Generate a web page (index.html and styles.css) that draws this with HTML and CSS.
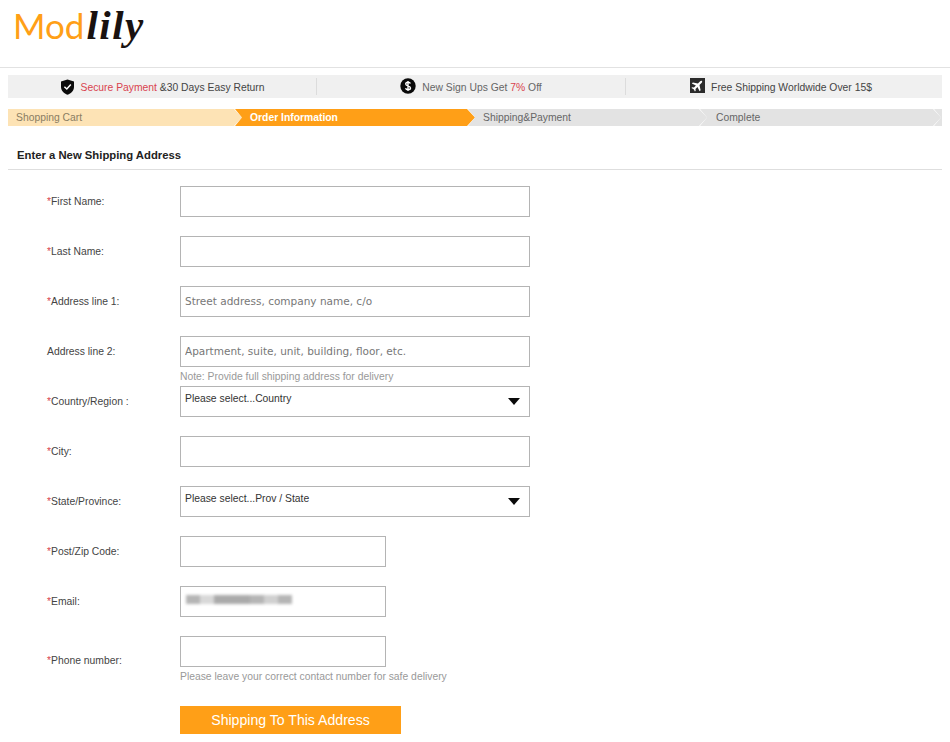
FILE: index.html
```html
<!DOCTYPE html>
<html lang="en">

<head>
    <meta charset="UTF-8">
    <meta name="viewport" content="width=device-width, initial-scale=1.0">
    <title>Enter a New Shipping Address</title>
    <link rel="stylesheet" href="styles.css">
</head>

<body>

    <header class="site-header">
        <a class="logo" href="#"><span class="logo-mod">Mod</span><span class="logo-lily">lily</span></a>
    </header>

    <div class="page">
        <div class="promo-bar">
            <div class="promo-item">
                <svg class="promo-icon" width="15" height="16" viewBox="0 0 15 16">
                    <path d="M7.5 0.5 L14 2.6 V8 C14 11.8 11 14.3 7.5 15.8 C4 14.3 1 11.8 1 8 V2.6 Z" fill="#0a0a0a"/>
                    <path d="M4.4 7.8 L6.8 10 L10.8 5.6" fill="none" stroke="#fff" stroke-width="1.5"/>
                </svg>
                <span><span class="red">Secure Payment</span> &amp;30 Days Easy Return</span>
            </div>
            <div class="promo-item">
                <svg class="promo-icon icon-up" width="16" height="16" viewBox="0 0 16 16">
                    <circle cx="8" cy="8" r="7.7" fill="#0a0a0a"/>
                    <path d="M10.4 5.6 C10 4.6 9 4.2 8 4.2 C6.7 4.2 5.7 4.9 5.7 6 C5.7 8.5 10.5 7.3 10.5 10 C10.5 11.1 9.4 11.8 8 11.8 C6.9 11.8 5.9 11.3 5.5 10.3 M8 3 V13" fill="none" stroke="#fff" stroke-width="1.4"/>
                </svg>
                <span class="muted">New Sign Ups Get <span class="red">7%</span> Off</span>
            </div>
            <div class="promo-item">
                <svg class="promo-icon icon-up" width="15" height="15" viewBox="0 0 15 15">
                    <rect width="15" height="15" fill="#2b2b2b"/>
                    <path transform="rotate(45 7.5 7.5)" d="M7.5 1.2 C8.2 1.2 8.6 2 8.6 3 V5.8 L13 8.6 V10 L8.6 8.6 V11.4 L10 12.6 V13.6 L7.5 12.9 L5 13.6 V12.6 L6.4 11.4 V8.6 L2 10 V8.6 L6.4 5.8 V3 C6.4 2 6.8 1.2 7.5 1.2 Z" fill="#fff"/>
                </svg>
                <span>Free Shipping Worldwide Over 15$</span>
            </div>
        </div>

        <ol class="steps">
            <li class="step step-done">Shopping Cart</li>
            <li class="step step-active">Order Information</li>
            <li class="step">Shipping&amp;Payment</li>
            <li class="step">Complete</li>
            <li class="step"></li>
        </ol>

        <h2 class="form-title">Enter a New Shipping Address</h2>

        <form class="address-form" action="">
            <div class="form-row">
                <label for="first"><span class="red">*</span>First Name:</label>
                <div class="field"><input type="text" id="first"></div>
            </div>
            <div class="form-row">
                <label for="last"><span class="red">*</span>Last Name:</label>
                <div class="field"><input type="text" id="last"></div>
            </div>
            <div class="form-row">
                <label for="addr1"><span class="red">*</span>Address line 1:</label>
                <div class="field"><input type="text" id="addr1" placeholder="Street address, company name, c/o"></div>
            </div>
            <div class="form-row">
                <label for="addr2">Address line 2:</label>
                <div class="field">
                    <input type="text" id="addr2" placeholder="Apartment, suite, unit, building, floor, etc.">
                    <p class="note">Note: Provide full shipping address for delivery</p>
                </div>
            </div>
            <div class="form-row">
                <label for="country"><span class="red">*</span>Country/Region :</label>
                <div class="field select-wrap">
                    <select id="country"><option>Please select...Country</option></select>
                </div>
            </div>
            <div class="form-row">
                <label for="city"><span class="red">*</span>City:</label>
                <div class="field"><input type="text" id="city"></div>
            </div>
            <div class="form-row">
                <label for="state"><span class="red">*</span>State/Province:</label>
                <div class="field select-wrap">
                    <select id="state"><option>Please select...Prov / State</option></select>
                </div>
            </div>
            <div class="form-row">
                <label for="zip"><span class="red">*</span>Post/Zip Code:</label>
                <div class="field field-short"><input type="text" id="zip"></div>
            </div>
            <div class="form-row">
                <label for="email"><span class="red">*</span>Email:</label>
                <div class="field field-short email-wrap">
                    <input type="text" id="email">
                    <div class="blurred"><i></i><i></i><i></i><i></i><i></i><i></i><i></i></div>
                </div>
            </div>
            <div class="form-row form-row-center">
                <label for="phone"><span class="red">*</span>Phone number:</label>
                <div class="field field-short">
                    <input type="text" id="phone">
                    <p class="note">Please leave your correct contact number for safe delivery</p>
                </div>
            </div>
            <button type="button" class="submit-btn">Shipping To This Address</button>
        </form>
    </div>

</body>

</html>
```

FILE: styles.css
```css
body {
    margin: 0;
    background: #fff;
    color: #444;
    font-family: "Liberation Sans", Arial, sans-serif;
    font-size: 10.35px;
}

.red {
    color: #d9434e;
}

.muted {
    color: #666;
}

.site-header {
    height: 67px;
    border-bottom: 1px solid #e2e2e2;
    overflow: hidden;
}

.logo {
    display: flex;
    align-items: baseline;
    height: 48px;
    padding-top: 1px;
    padding-left: 13px;
    line-height: 48px;
    text-decoration: none;
}

.logo-mod {
    font-family: Lato, sans-serif;
    font-weight: 400;
    font-size: 35px;
    color: #ff9f17;
}

.logo-lily {
    margin-left: 2px;
    font-family: "Liberation Serif", serif;
    font-style: italic;
    font-weight: 700;
    font-size: 41px;
    letter-spacing: 1.5px;
    color: #1a1210;
}

.page {
    padding: 7px 8px 0;
}

.promo-bar {
    display: grid;
    grid-template-columns: 309px 309px 316px;
    height: 23px;
    background: #f0f0f0;
}

.promo-item {
    display: flex;
    align-items: center;
    justify-content: center;
    gap: 6px;
    margin: 3px 0;
    padding-top: 1px;
    border-right: 1px solid #dcdcdc;
}

.promo-item:last-child {
    padding-right: 6px;
    border-right: none;
}

.promo-icon {
    flex: none;
}

.icon-up {
    margin-top: -3px;
}

.steps {
    display: grid;
    grid-template-columns: 227px 233px 232px 234px 8px;
    height: 17px;
    margin: 11px 0 0;
    padding: 0;
    list-style: none;
}

.step {
    margin-right: -7px;
    padding-left: 15px;
    line-height: 17px;
    color: #666;
    background: #e3e3e3;
    clip-path: polygon(0 0, calc(100% - 8px) 0, 100% 50%, calc(100% - 8px) 100%, 0 100%, 7px 50%);
}

.step:first-child {
    padding-left: 8px;
    clip-path: polygon(0 0, calc(100% - 8px) 0, 100% 50%, calc(100% - 8px) 100%, 0 100%);
}

.step:nth-child(4) {
    padding-left: 16px;
}

.step:last-child {
    margin-right: 0;
    padding-left: 0;
    clip-path: polygon(0 0, 100% 0, 100% 100%, 0 100%, 7px 50%);
}

.step-done {
    color: #8a7d63;
    background: #fde3b5;
}

.step-active {
    color: #fff;
    font-weight: 700;
    background: #ff9f17;
}

.form-title {
    margin: 0;
    padding: 22px 0 7px 9px;
    border-bottom: 1px solid #dedede;
    font-size: 11.3px;
    line-height: 14px;
    color: #222;
}

.address-form {
    padding-top: 16px;
}

.form-row {
    display: flex;
    align-items: flex-start;
    height: 50px;
}

.form-row-center {
    align-items: center;
}

.form-row label {
    flex: none;
    width: 133px;
    margin-left: 39px;
    line-height: 32px;
    white-space: nowrap;
}

.field {
    position: relative;
    width: 350px;
}

.field-short {
    width: 206px;
}

.form-row-center .field {
    height: 50px;
}

.field input,
.field select {
    display: block;
    box-sizing: border-box;
    width: 100%;
    height: 31px;
    padding: 0 4px;
    border: 1px solid #b4b4b4;
    border-radius: 0;
    background: #fff;
    outline: none;
}

.field input {
    padding-bottom: 2px;
    font-family: "DejaVu Sans", sans-serif;
    font-size: 10.5px;
}

.field input::placeholder {
    color: #777;
    opacity: 1;
}

.field select {
    padding-bottom: 6px;
    font-family: "Liberation Sans", Arial, sans-serif;
    font-size: 10.35px;
    color: #333;
    appearance: none;
}

.select-wrap::after {
    content: "";
    position: absolute;
    top: 12px;
    right: 10px;
    border-top: 7px solid #0a0a0a;
    border-left: 6.5px solid transparent;
    border-right: 6.5px solid transparent;
}

.note {
    margin: 3px 0 0;
    line-height: 13px;
    color: #999;
    white-space: nowrap;
}

.blurred {
    position: absolute;
    top: 9px;
    left: 6px;
    display: flex;
    height: 9px;
    filter: blur(1.5px);
}

.blurred i {
    display: block;
    width: 14px;
    background: #b5b5b5;
}

.blurred i:nth-child(2) {
    background: #d8d8d8;
}

.blurred i:nth-child(3),
.blurred i:nth-child(4) {
    width: 18px;
    background: #aaa;
}

.blurred i:nth-child(6) {
    background: #d0d0d0;
}

.submit-btn {
    display: block;
    width: 221px;
    height: 28px;
    margin: 20px 0 0 172px;
    border: none;
    background: #ff9f17;
    color: #fff;
    font-family: "Liberation Sans", Arial, sans-serif;
    font-size: 14.1px;
}
```
